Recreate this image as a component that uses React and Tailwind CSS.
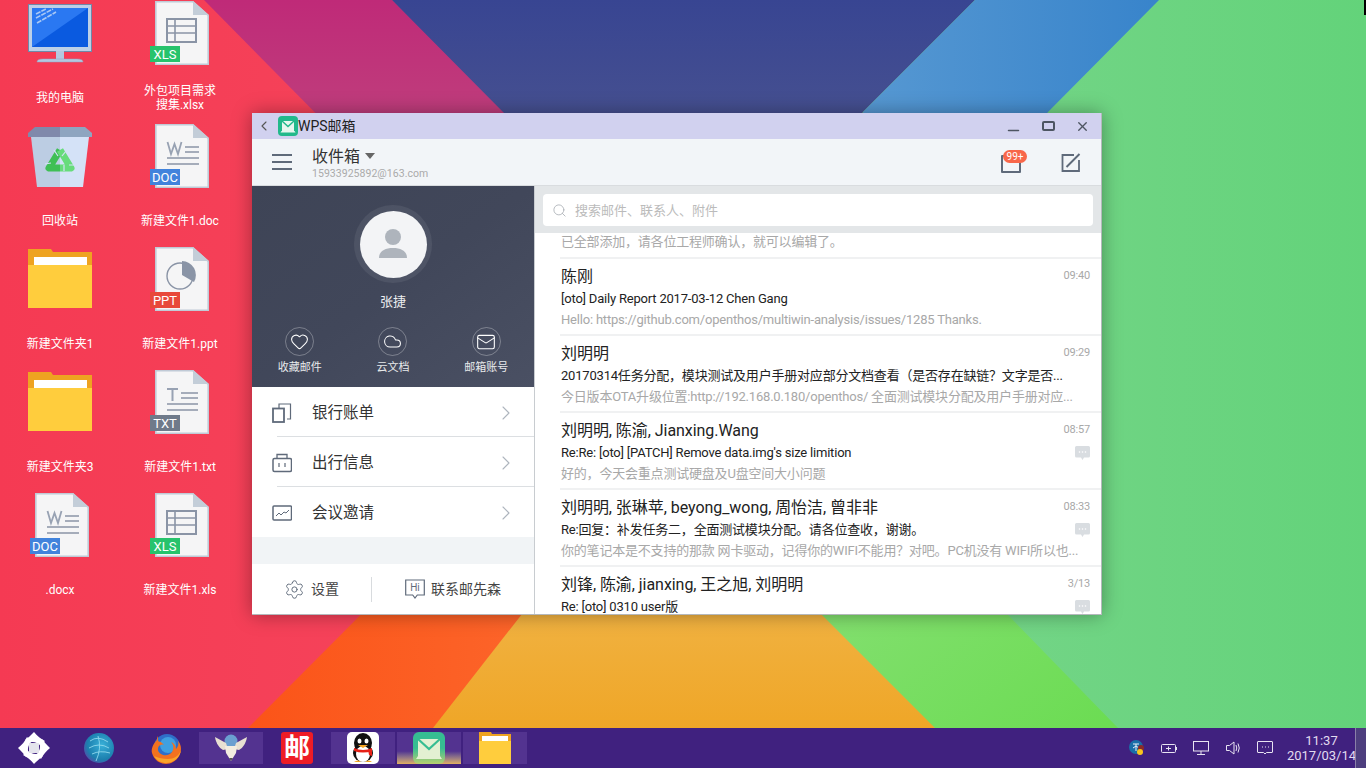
import React from 'react';
import { ChevronLeft, ChevronRight, Heart, Cloud, Mail, Settings, Search, Minus, X } from 'lucide-react';

const Wallpaper = () => (
  <svg className="absolute inset-0" width="1366" height="728" viewBox="0 0 1366 728">
    <defs>
      <linearGradient id="red" x1="0" x2="1" y1="0" y2="0"><stop offset="0" stopColor="#f53a53" /><stop offset="1" stopColor="#f54a60" /></linearGradient>
      <linearGradient id="green" x1="0" x2="1" y1="0" y2="0"><stop offset="0" stopColor="#80d690" /><stop offset="1" stopColor="#63d37a" /></linearGradient>
      <linearGradient id="magenta" x1="0" x2="0" y1="0" y2="1"><stop offset="0" stopColor="#bf2a78" /><stop offset="0.4" stopColor="#bf3e7c" /></linearGradient>
      <linearGradient id="navy" x1="0" x2="0" y1="0" y2="1"><stop offset="0" stopColor="#384592" /><stop offset="0.4" stopColor="#465090" /></linearGradient>
      <linearGradient id="blue" x1="0" x2="1" y1="0" y2="0"><stop offset="0" stopColor="#5698d2" /><stop offset="1" stopColor="#3884cb" /></linearGradient>
      <linearGradient id="orange" x1="0" x2="1" y1="0" y2="0"><stop offset="0" stopColor="#fb5418" /><stop offset="1" stopColor="#fd6c32" /></linearGradient>
      <linearGradient id="yellow" x1="0" x2="0" y1="0" y2="1"><stop offset="0.5" stopColor="#f1b446" /><stop offset="1" stopColor="#efa627" /></linearGradient>
      <linearGradient id="lime" x1="0" x2="1" y1="0" y2="1"><stop offset="0" stopColor="#8ae078" /><stop offset="1" stopColor="#6bdc52" /></linearGradient>
    </defs>
    <rect x="0" y="0" width="700" height="728" fill="url(#red)" />
    <rect x="700" y="0" width="666" height="728" fill="url(#green)" />
    <polygon points="204,0 392,0 650,250 500,300" fill="url(#magenta)" />
    <polygon points="392,0 975,0 863,112 700,300 503,112" fill="url(#navy)" />
    <polygon points="975,0 1159,0 1048,112 900,300 863,112" fill="url(#blue)" />
    <polygon points="475,500 660,500 433,728 248,728" fill="url(#orange)" />
    <polygon points="650,450 800,450 935,728 433,728" fill="url(#yellow)" />
    <polygon points="821,614 900,500 1007,614 1118,728 935,728" fill="url(#lime)" />
  </svg>
);

const MonitorIcon = () => (
  <svg width="64" height="60" viewBox="0 0 64 60" className="mt-1">
    <rect x="0.5" y="0.5" width="63" height="47" fill="#bcd0e8" stroke="#6f88a8" />
    <rect x="4" y="4" width="56" height="39" fill="#0a5ae0" />
    <polygon points="4,4 60,4 4,43" fill="#2a78f2" />
    <path d="M8 10l10-5M8 14l17-9M9 19l19-11" stroke="#a9c8f5" strokeWidth="1.6" strokeDasharray="5 1" />
    <rect x="28" y="47" width="8" height="8" fill="#b4c8e0" />
    <path d="M9 58q0-3 6-3h34q6 0 6 3z" fill="#b4c8e0" stroke="#8ea6c4" strokeWidth="0.5" />
  </svg>
);

const TrashIcon = () => (
  <svg width="64" height="60" viewBox="0 0 64 60" className="mt-1">
    <polygon points="3,10 32,10 32,60 9,60" fill="#bccde3" />
    <polygon points="32,10 61,10 55,60 32,60" fill="#d4e2f7" />
    <polygon points="7,0 32,0 32,10 0,10 0,6" fill="#8089ab" />
    <polygon points="32,0 57,0 64,6 64,10 32,10" fill="#8ea5c0" />
    <path d="M32 23L21 41H32" fill="none" stroke="#3fbf55" strokeWidth="7" strokeLinejoin="round" />
    <path d="M32 23L43 41H32" fill="none" stroke="#67dc7b" strokeWidth="7" strokeLinejoin="round" />
    <path d="M26 23l4 6M17 37l6-1M36 38v6M38 24l-4 5M47 38l-6 0" stroke="#d4e2f7" strokeWidth="1.2" />
  </svg>
);

const FolderIcon = () => (
  <svg width="64" height="60" viewBox="0 0 64 60" className="mt-[3px]">
    <polygon points="0,0 23,0 25,3 64,3 64,20 0,20" fill="#eea321" />
    <rect x="6" y="8" width="53" height="10" fill="#ffffff" />
    <rect x="0" y="16" width="64" height="43" fill="#ffcd3d" />
  </svg>
);

const sheetLines = {
  XLS: (
    <g stroke="#8a94a6" fill="none">
      <rect x="17" y="19" width="29" height="23" strokeWidth="2" />
      <path d="M17 26h29M17 33h29M25 19v23" strokeWidth="1.6" />
    </g>
  ),
  DOC: (
    <g stroke="#8a94a6" strokeWidth="1.6">
      <path d="M35 24h14M35 29h14M17 35h32M17 41h32" />
      <path d="M17.5 19l3.5 12 3.5-10 3.5 10 3.5-12" fill="none" stroke="#98a2b3" strokeWidth="1.8" />
    </g>
  ),
  PPT: (
    <g>
      <circle cx="30" cy="30" r="13" fill="none" stroke="#8a94a6" strokeWidth="1.4" />
      <path d="M32 15a14 14 0 0 1 12 21l-12-7z" fill="#8a94a6" />
    </g>
  ),
  TXT: (
    <g stroke="#8a94a6" strokeWidth="1.6">
      <path d="M17 20h11M22.5 20v12" stroke="#98a2b3" strokeWidth="2" />
      <path d="M31 24h17M31 29h17M17 35h31M17 41h31" />
    </g>
  ),
};

const badgeColors = { XLS: 'bg-[#27c36c]', DOC: 'bg-[#4183dc]', PPT: 'bg-[#e8493a]', TXT: 'bg-[#6f7a8a]' };

const FileIcon = ({ type }) => (
  <div className="relative w-[60px] h-[66px]">
    <svg width="60" height="66" viewBox="0 0 60 66" className="absolute left-0 top-0">
      <polygon points="5.8,1.8 43,1.8 58.2,15.5 58.2,64.2 5.8,64.2" fill="#f5f5f6" stroke="#c0cad6" strokeWidth="1.6" />
      <polygon points="43,1 59,15 43,15" fill="#c3cdd8" />
      {sheetLines[type]}
    </svg>
    <span className={`absolute left-0 top-[46px] w-[30px] h-4 flex items-center justify-center text-[13px] leading-none text-white ${badgeColors[type]}`}>
      {type}
    </span>
  </div>
);

const desktopItems = [
  { icon: <MonitorIcon />, label: '我的电脑' },
  { icon: <FileIcon type="XLS" />, label: <>外包项目需求<br />搜集.xlsx</> },
  { icon: <TrashIcon />, label: '回收站' },
  { icon: <FileIcon type="DOC" />, label: '新建文件1.doc' },
  { icon: <FolderIcon />, label: '新建文件夹1' },
  { icon: <FileIcon type="PPT" />, label: '新建文件1.ppt' },
  { icon: <FolderIcon />, label: '新建文件夹3' },
  { icon: <FileIcon type="TXT" />, label: '新建文件1.txt' },
  { icon: <FileIcon type="DOC" />, label: '.docx' },
  { icon: <FileIcon type="XLS" />, label: '新建文件1.xls' },
];

const DesktopGrid = () => (
  <div className="relative grid grid-cols-[120px_120px] auto-rows-[123px] w-[240px]">
    {desktopItems.map((item, i) => (
      <div key={i} className="flex flex-col items-center">
        <div className="h-[70px] flex items-start justify-center">{item.icon}</div>
        <div className="h-[53px] pt-[2px] flex items-center justify-center text-center text-xs leading-[14px] text-white">{item.label}</div>
      </div>
    ))}
  </div>
);

const MailLogo = () => (
  <svg width="20" height="20" viewBox="0 0 20 20">
    <rect width="20" height="20" rx="4" fill="#22b98b" />
    <path d="M4 5h12v10H4z" fill="#e6f7ee" />
    <path d="M4 5l6 5.500L16 5" fill="none" stroke="#22b98b" strokeWidth="1.5" />
    <path d="M3.500 15h13l1 1.500h-15z" fill="#e6f7ee" />
  </svg>
);

const quickLinks = [
  { label: '收藏邮件', Icon: Heart, size: 19 },
  { label: '云文档', Icon: Cloud, size: 19 },
  { label: '邮箱账号', Icon: Mail, size: 20 },
];

const CopyIcon = () => (
  <svg width="20" height="20" viewBox="0 0 20 20" fill="none" stroke="#5f6a7a">
    <path d="M7 5V1h11.5v15H15" strokeWidth="1.2" />
    <rect x="1" y="5.5" width="11" height="13.5" strokeWidth="1.8" />
  </svg>
);

const CaseIcon = () => (
  <svg width="20" height="20" viewBox="0 0 20 20" fill="none" stroke="#5f6a7a">
    <rect x="1" y="5.5" width="18.5" height="13" rx="1.5" strokeWidth="1.5" />
    <path d="M5 5V1.5h10V5" strokeWidth="1.3" />
    <path d="M7 10v4M13 10v4" strokeWidth="1.2" />
  </svg>
);

const TrendIcon = () => (
  <svg width="20" height="16" viewBox="0 0 20 16" fill="none" stroke="#5f6a7a">
    <rect x="1" y="1" width="18.5" height="14" rx="1" strokeWidth="1.5" />
    <path d="M4 11l3-3 2 2 3-3 2 1 3-3" strokeWidth="1" />
  </svg>
);

const menuItems = [
  { label: '银行账单', icon: <CopyIcon /> },
  { label: '出行信息', icon: <CaseIcon /> },
  { label: '会议邀请', icon: <TrendIcon /> },
];

const HiIcon = () => (
  <div className="relative w-5 h-5">
    <svg width="20" height="20" viewBox="0 0 20 20" fill="none" stroke="#5f6a7a" className="absolute inset-0">
      <path d="M0.7 1h18.6v15h-7L10 19l-2.300-3h-7z" strokeWidth="1.2" />
    </svg>
    <span className="absolute inset-x-0 top-[3px] text-center text-[10px] leading-[12px] text-[#5f6a7a]">Hi</span>
  </div>
);

const Sidebar = () => (
  <div className="w-[283px] shrink-0 flex flex-col border-r border-[#c8ccd0]">
    <div className="h-[201px] flex flex-col items-center bg-gradient-to-br from-[#3e4456] via-[#41475a] to-[#4a5063]">
      <div className="mt-[19px] w-[78px] h-[78px] rounded-full bg-white/[0.07] flex items-center justify-center">
        <div className="w-[67px] h-[67px] rounded-full bg-[#f3f4f6] flex items-center justify-center">
          <svg width="28" height="30" viewBox="0 0 28 30" fill="#aeb4bc">
            <circle cx="14" cy="8" r="8" />
            <path d="M0 29c0-7 6-10 14-10s14 3 14 10z" />
          </svg>
        </div>
      </div>
      <div className="mt-[9px] h-5 leading-5 text-[13px] text-[#eceef0]">张捷</div>
      <div className="mt-[15px] w-full grid grid-cols-3 px-[1px]">
        {quickLinks.map(({ label, Icon, size }) => (
          <div key={label} className="flex flex-col items-center">
            <div className="w-[29px] h-[29px] rounded-full border border-white/30 flex items-center justify-center">
              <Icon size={size} strokeWidth={1.3} color="#ffffff" />
            </div>
            <div className="mt-[4px] text-[11px] leading-[16px] text-[#e8eaec]">{label}</div>
          </div>
        ))}
      </div>
    </div>
    <div className="h-[150px] bg-white flex flex-col">
      {menuItems.map((item, i) => (
        <div key={item.label} className="h-[50px] pl-[25px] flex">
          <div className={`flex-1 flex items-center ${i < 2 ? 'pt-[2px] border-b border-[#dcdfe2]' : 'pt-[1px]'}`}>
            <div className="w-5 -ml-[5px] flex justify-center">{item.icon}</div>
            <div className="ml-5 flex-1 pt-[2px] text-[15.5px] text-[#333333]">{item.label}</div>
            <ChevronRight size={24} strokeWidth={1.1} color="#aeb5be" className="mr-[16px]" />
          </div>
        </div>
      ))}
    </div>
    <div className="h-[27px] bg-[#f1f4f6]" />
    <div className="flex-1 bg-white flex items-center">
      <div className="w-[120px] h-[25px] flex items-center pl-[32px] border-r border-[#d8dbde]">
        <Settings size={21} strokeWidth={1.1} color="#5f6a7a" />
        <span className="ml-[6px] text-[14px] text-[#444444]">设置</span>
      </div>
      <div className="pl-[33px] flex items-center">
        <HiIcon />
        <span className="ml-[6px] text-[14px] text-[#444444] whitespace-nowrap">联系邮先森</span>
      </div>
    </div>
  </div>
);

const mails = [
  {
    name: '陈刚',
    time: '09:40',
    subject: '[oto] Daily Report 2017-03-12 Chen Gang',
    preview: 'Hello: https://github.com/openthos/multiwin-analysis/issues/1285 Thanks.',
  },
  {
    name: '刘明明',
    time: '09:29',
    subject: '20170314任务分配，模块测试及用户手册对应部分文档查看（是否存在缺链？文字是否...',
    preview: '今日版本OTA升级位置:http://192.168.0.180/openthos/ 全面测试模块分配及用户手册对应...',
  },
  {
    name: '刘明明, 陈渝, Jianxing.Wang',
    time: '08:57',
    subject: "Re:Re: [oto] [PATCH] Remove data.img's size limition",
    preview: '好的，今天会重点测试硬盘及U盘空间大小问题',
    thread: true,
  },
  {
    name: '刘明明, 张琳苹, beyong_wong, 周怡洁, 曾非非',
    time: '08:33',
    subject: 'Re:回复：补发任务二，全面测试模块分配。请各位查收，谢谢。',
    preview: '你的笔记本是不支持的那款 网卡驱动，记得你的WIFI不能用？对吧。PC机没有 WIFI所以也...',
    thread: true,
  },
  {
    name: '刘锋, 陈渝, jianxing, 王之旭, 刘明明',
    time: '3/13',
    subject: 'Re: [oto] 0310 user版',
    preview: '',
    thread: true,
  },
];

const Bubble = () => (
  <svg width="15" height="15" viewBox="0 0 15 15">
    <path d="M1.500 0h12A1.500 1.500 0 0 1 15 1.500V10a1.500 1.500 0 0 1-1.500 1.500H9L7.500 14 6 11.500H1.500A1.500 1.500 0 0 1 0 10V1.500A1.500 1.500 0 0 1 1.500 0z" fill="#d9dde1" />
    <circle cx="4.500" cy="6" r="0.8" fill="#fff" />
    <circle cx="7.500" cy="6" r="0.8" fill="#fff" />
    <circle cx="10.500" cy="6" r="0.8" fill="#fff" />
  </svg>
);

const MailRow = ({ mail }) => (
  <div className="ml-[25px] h-[77px] shrink-0 border-t-2 border-[#f0f1f2] flex pt-2 pl-[1px] overflow-hidden">
    <div className="flex-1 min-w-0">
      <div className="h-5 leading-5 text-base tracking-[-0.05px] text-[#222222] whitespace-nowrap">{mail.name}</div>
      <div className="mt-[2px] h-5 leading-5 text-[13px] tracking-[-0.2px] text-[#222222] whitespace-nowrap">{mail.subject}</div>
      <div className="mt-[1px] h-5 leading-5 text-[13px] tracking-[-0.2px] text-[#a8a8a8] whitespace-nowrap">{mail.preview}</div>
    </div>
    <div className="w-[26px] mr-[11px] flex flex-col items-end">
      <div className="mt-[1px] h-4 leading-4 text-[11px] tracking-[-0.2px] text-[#a8a8a8]">{mail.time}</div>
      {mail.thread && <div className="mt-2"><Bubble /></div>}
    </div>
  </div>
);

const MailList = () => (
  <div className="flex-1 min-w-0 flex flex-col bg-white overflow-hidden">
    <div className="h-[47px] shrink-0 bg-[#e3e6e8] px-2 pt-[8px]">
      <div className="h-8 bg-white rounded flex items-center pl-[9px]">
        <Search size={15} strokeWidth={1.3} color="#a8adb3" />
        <span className="ml-2 pt-[1px] text-[13px] text-[#bbbbbb]">搜索邮件、联系人、附件</span>
      </div>
    </div>
    <div className="h-[24px] shrink-0 pl-[26px] text-[13px] leading-[18px] tracking-[-0.2px] text-[#a8a8a8] whitespace-nowrap">
      已全部添加，请各位工程师确认，就可以编辑了。
    </div>
    {mails.map((mail, i) => <MailRow key={i} mail={mail} />)}
  </div>
);

const MailWindow = () => (
  <div className="absolute left-[252px] top-[113px] w-[850px] h-[502px] flex flex-col border-r border-b border-[#b4b8bc] shadow-[0_0_18px_rgba(0,0,0,0.35)]">
    <div className="h-[26px] shrink-0 bg-[#d1d1ef] flex items-center">
      <ChevronLeft size={16} strokeWidth={1.6} color="#555555" className="ml-[4px]" />
      <div className="ml-[6px]"><MailLogo /></div>
      <span className="text-sm text-[#222222]">WPS邮箱</span>
      <div className="ml-auto flex items-center text-[#4d5562]">
        <Minus size={17} strokeWidth={2.2} className="mt-[8px]" />
        <div className="ml-[20px] w-[13px] h-[10px] rounded-[2px] border-2 border-[#4d5562]" />
        <X size={15} strokeWidth={2.2} className="ml-[20px] mr-[11px]" />
      </div>
    </div>
    <div className="h-[47px] shrink-0 bg-[#f2f5f8] border-b border-[#d9dcdf] flex items-center">
      <div className="ml-5 w-5 flex flex-col gap-[5px]">
        <div className="h-[2px] bg-[#5f6a7a]" />
        <div className="h-[2px] bg-[#5f6a7a]" />
        <div className="h-[2px] bg-[#5f6a7a]" />
      </div>
      <div className="ml-5 flex flex-col">
        <div className="flex items-center h-[24px]">
          <span className="pt-[2px] text-base text-[#333333]">收件箱</span>
          <span className="ml-[5px] w-0 h-0 border-x-[5.5px] border-x-transparent border-t-[6px] border-t-[#666666]" />
        </div>
        <span className="text-[10.5px] leading-3 tracking-[0.04px] text-[#aaaaaa]">15933925892@163.com</span>
      </div>
      <div className="ml-auto flex items-center">
        <div className="relative w-5 h-[18px] border-2 border-[#5f6a7a] rounded-[1px] mt-[4px]">
          <span className="absolute -top-[7px] left-0 w-6 h-[13px] rounded-full bg-[#f8674a] text-white text-[10px] leading-[13px] text-center">99+</span>
        </div>
        <svg width="20" height="19" viewBox="0 0 20 19" fill="none" stroke="#5f6a7a" className="ml-[40px] mr-5">
          <path d="M13 2H1.500v16H18V7" strokeWidth="1.8" />
          <path d="M5.500 14L18.500 1" strokeWidth="2" />
        </svg>
      </div>
    </div>
    <div className="flex-1 min-h-0 flex">
      <Sidebar />
      <MailList />
    </div>
  </div>
);

const petal = 'M16 0C19 4 23 7 27 9L22.500 13.500C19 10 14 9 10 11L7 8C10 6 13 3 16 0z';

const StartLogo = () => (
  <svg width="32" height="32" viewBox="0 0 32 32" fill="#ffffff">
    <path d={petal} />
    <path d={petal} transform="rotate(90 16 16)" />
    <path d={petal} transform="rotate(180 16 16)" />
    <path d={petal} transform="rotate(270 16 16)" />
    <rect x="11" y="11" width="10" height="10" rx="1" fill="#e4e4ec" />
  </svg>
);

const GlobeIcon = () => (
  <svg width="30" height="32" viewBox="0 0 30 32">
    <defs>
      <radialGradient id="globe" cx="0.6" cy="0.4" r="0.7"><stop offset="0" stopColor="#38b0d8" /><stop offset="0.7" stopColor="#1c7fae" /><stop offset="1" stopColor="#5a4aa8" /></radialGradient>
    </defs>
    <circle cx="15" cy="16" r="15" fill="url(#globe)" />
    <path d="M6 9q8-6 18 1M5 16q10-6 20 0M8 22q8-4 18-1M14 4q4 12-2 25" fill="none" stroke="#8fd8ec" strokeWidth="0.9" />
  </svg>
);

const FirefoxIcon = () => (
  <svg width="32" height="32" viewBox="0 0 32 32">
    <circle cx="17" cy="15" r="13" fill="#2f6fc8" />
    <circle cx="18" cy="13" r="8" fill="#3fa0e0" />
    <path d="M8 4c-1 2-1 3-1 4-4 4-6 9-5 13 2 7 8 11 14 11 8 0 15-7 15-15 0-3-1-6-3-8 1 3 0 6-2 8 0-3-2-6-5-7 3 3 3 7 1 10-3 4-8 4-11 2-3-2-4-5-2-8 1-1 4-2 5-1 0-1-3-2-3-3-2 0-3-1-3-2z" fill="#f2711f" />
    <path d="M4 24c3 5 8 7 12 7 8 0 14-6 15-13-2 6-7 9-13 9-5 0-10-1-14-3z" fill="#f9a52a" />
  </svg>
);

const FennecIcon = () => (
  <svg width="32" height="28" viewBox="0 0 32 28">
    <circle cx="16" cy="7" r="6.500" fill="#6a9fd0" />
    <path d="M0 3l11 6 2 6-5 1C4 14 1 9 0 3z" fill="#e8e0d2" />
    <path d="M32 3l-11 6-2 6 5 1c4-2 7-7 8-13z" fill="#e8e0d2" />
    <path d="M10 12h12l-1 7-5 8-5-8z" fill="#f2ece0" />
    <path d="M14 24h4l-2 3z" fill="#555" />
  </svg>
);

const QQIcon = () => (
  <div className="w-8 h-8 rounded-[5px] bg-white flex items-center justify-center">
    <svg width="26" height="30" viewBox="0 0 26 30">
      <ellipse cx="13" cy="10" rx="9" ry="10" fill="#111111" />
      <ellipse cx="13" cy="20" rx="10" ry="9" fill="#111111" />
      <ellipse cx="13" cy="21" rx="7" ry="8" fill="#ffffff" />
      <ellipse cx="9.500" cy="8" rx="2" ry="2.500" fill="#ffffff" />
      <ellipse cx="16.500" cy="8" rx="2" ry="2.500" fill="#ffffff" />
      <path d="M8 12h10l-5 3z" fill="#f5a623" />
      <path d="M4 15q9 4 18 0v3q-9 3-18 0z" fill="#e62117" />
      <path d="M18 17l4 0 0 6-3-1z" fill="#e62117" />
      <path d="M4 29q4-3 7 0zM15 29q4-3 7 0z" fill="#f5a623" />
    </svg>
  </div>
);

const MailDockIcon = () => (
  <svg width="32" height="32" viewBox="0 0 32 32">
    <defs>
      <linearGradient id="dockMail" x1="0" x2="0" y1="0" y2="1"><stop offset="0.5" stopColor="#36bd92" /><stop offset="1" stopColor="#b8cf70" /></linearGradient>
    </defs>
    <rect width="32" height="32" rx="6" fill="url(#dockMail)" />
    <rect x="5" y="7" width="22" height="17" fill="#e3f0d2" />
    <path d="M5 7l11 10L27 7" fill="none" stroke="#36bd92" strokeWidth="2.200" />
    <path d="M5 24h22l2 3H3z" fill="#e3f0d2" />
  </svg>
);

const DockFolder = () => (
  <svg width="32" height="32" viewBox="0 0 32 32">
    <polygon points="0,0 12,0 13,2 32,2 32,12 0,12" fill="#eea321" />
    <rect x="3" y="4" width="26" height="6" fill="#ffffff" />
    <rect x="0" y="9" width="32" height="23" fill="#ffcd3d" />
  </svg>
);

const TrayIcons = () => (
  <div className="flex items-center">
    <svg width="16" height="16" viewBox="0 0 16 16">
      <circle cx="7" cy="7" r="7" fill="#1a6ea8" />
      <path d="M4 4h6M7 4v7M4 8l3-2 3 2" stroke="#e8f0f8" strokeWidth="1" fill="none" />
      <circle cx="12" cy="8" r="3" fill="#8a2a2a" />
      <circle cx="11" cy="12" r="3" fill="#f9c51d" />
    </svg>
    <svg width="16" height="9" viewBox="0 0 16 9" fill="none" stroke="#e8e4f2" className="ml-[16px]">
      <rect x="0.500" y="0.500" width="14" height="8" rx="1" />
      <path d="M15.500 3v3" />
      <path d="M5 4.500h5M7.500 2.500v4" />
    </svg>
    <svg width="16" height="14" viewBox="0 0 16 14" fill="none" stroke="#e8e4f2" className="ml-[16px]">
      <rect x="0.500" y="0.500" width="15" height="9.500" />
      <path d="M8 10v3M4 13.500h8" />
    </svg>
    <svg width="15" height="14" viewBox="0 0 15 14" fill="none" stroke="#e8e4f2" className="ml-[17px]">
      <path d="M0.500 4.500h3L8 1v12L3.500 9.500h-3z" />
      <path d="M10 4q1.500 3 0 6M12 2.500q2.500 4.500 0 9" />
    </svg>
    <svg width="16" height="14" viewBox="0 0 16 14" fill="none" stroke="#e8e4f2" className="ml-[16px]">
      <path d="M1 0.500h14q0.500 0 0.500 0.500v10q0 0.500-0.500 0.500H9.500L8 13l-1.500-1.500H1q-0.500 0-0.500-0.500V1q0-0.500 0.500-0.500z" />
      <path d="M5 6h1M8 6h1M11 6h1" />
    </svg>
  </div>
);

const Taskbar = () => (
  <div className="h-10 shrink-0 bg-[#40217f] flex items-center relative">
    <div className="ml-[18px]"><StartLogo /></div>
    <div className="ml-[34px]"><GlobeIcon /></div>
    <div className="ml-9"><FirefoxIcon /></div>
    <div className="ml-[17px] w-16 h-8 bg-[#533390] flex items-center justify-center"><FennecIcon /></div>
    <div className="ml-[18px] w-8 h-8 rounded-[3px] bg-[#ee1c25] flex items-center justify-center text-[26px] leading-none font-bold text-white">邮</div>
    <div className="ml-[18px] w-16 h-8 bg-[#533390] flex items-center justify-center"><QQIcon /></div>
    <div className="ml-[2px] w-16 h-8 bg-gradient-to-t from-[#e0b060] to-[#533390] to-40% flex items-center justify-center"><MailDockIcon /></div>
    <div className="ml-[2px] w-16 h-8 bg-[#533390] flex items-center justify-center"><DockFolder /></div>
    <div className="ml-auto flex items-center h-full">
      <TrayIcons />
      <div className="w-[82px] pl-[15px] flex flex-col items-center text-[13px] leading-[15px] text-[#e2dcf0] whitespace-nowrap">
        <span>11:37</span>
        <span>2017/03/14</span>
      </div>
      <div className="w-[11px] h-full bg-[#4d3e7e] border-l border-[#8a80a8]" />
    </div>
  </div>
);

export default function App() {
  return (
    <div className="w-[1366px] h-[768px] overflow-hidden flex flex-col [font-family:Roboto,'Noto_Sans_CJK_SC',sans-serif]">
      <div className="relative flex-1 min-h-0">
        <Wallpaper />
        <DesktopGrid />
        <MailWindow />
        <div className="absolute right-0 top-0 w-[2px] h-[15px] bg-black" />
      </div>
      <Taskbar />
    </div>
  );
}
